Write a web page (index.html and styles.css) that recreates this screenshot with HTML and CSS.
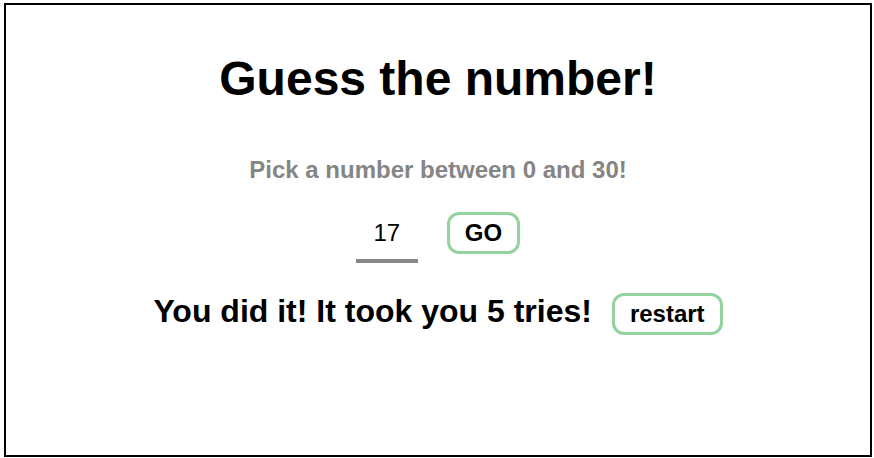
FILE: index.html
```html
<!DOCTYPE html>
<html lang="en">
<head>
<meta charset="utf-8">
<title>Guess the number!</title>
<link rel="stylesheet" href="styles.css">
</head>
<body>
<main class="frame">
  <h1 class="title">Guess the number!</h1>
  <p class="hint">Pick a number between 0 and 30!</p>
  <div class="guess-row">
    <div class="guess-input">17</div>
    <button class="btn" type="button">GO</button>
  </div>
  <div class="result-row">
    <span class="result">You did it! It took you 5 tries!</span>
    <button class="btn" type="button">restart</button>
  </div>
</main>
</body>
</html>
```
FILE: styles.css
```css
html, body {
  margin: 0;
  padding: 0;
  background: #fff;
}
body {
  font-family: "Liberation Sans", Arial, Helvetica, sans-serif;
  color: #000;
  padding: 3px 0 0 4px;
}
.frame {
  box-sizing: border-box;
  width: 868px;
  height: 454px;
  border: 2px solid #000;
  display: flex;
  flex-direction: column;
  align-items: center;
}
.title {
  margin: 46px 0 0;
  font-size: 48px;
  line-height: 1.15;
  font-weight: bold;
}
.hint {
  margin: 50px 0 0;
  font-size: 24px;
  line-height: normal;
  font-weight: bold;
  color: #858585;
}
.guess-row {
  margin-top: 28px;
  display: flex;
  align-items: baseline;
  gap: 29px;
}
.guess-input {
  box-sizing: border-box;
  width: 62px;
  padding: 0 0 12px;
  border-bottom: 4px solid #888;
  font-size: 24px;
  line-height: normal;
  text-align: center;
}
.btn {
  font-family: "Liberation Sans", Arial, Helvetica, sans-serif;
  font-size: 24px;
  font-weight: bold;
  line-height: 1;
  color: #000;
  background: #fff;
  border: 3px solid #94d2a0;
  border-radius: 12px;
  padding: 6px 15px;
  margin: 0;
}
.result-row {
  margin-top: 30px;
  display: flex;
  align-items: baseline;
  gap: 20px;
}
.result {
  font-size: 32px;
  line-height: normal;
  font-weight: bold;
}
```
